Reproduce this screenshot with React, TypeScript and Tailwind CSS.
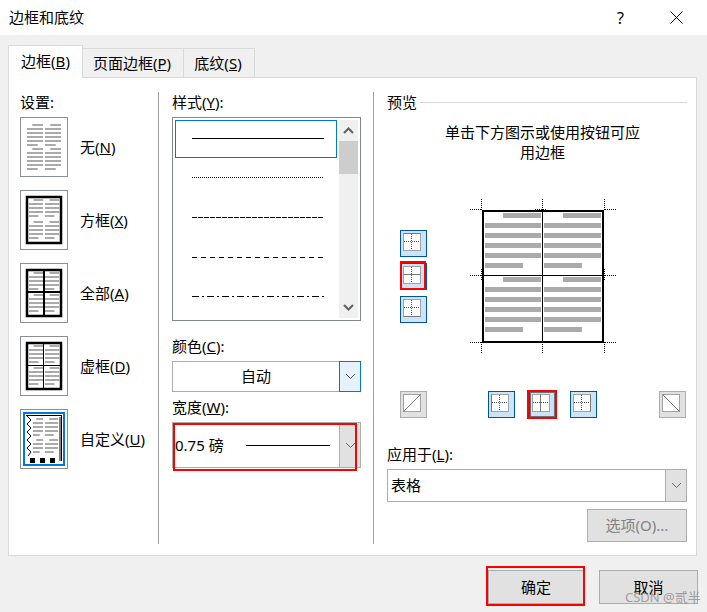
import type { ReactNode } from "react"

const rows = [0, 1, 2, 3, 4, 5]

// small page picture used by the setting thumbnails
function TextColumn({ x1, x2, starts, counts }: { x1: number; x2: number; starts: number[]; counts: number[] }) {
  const w = x2 - x1
  return (
    <>
      {starts.map((start, half) =>
        Array.from({ length: counts[half] }, (_, r) => {
          const rx = r === 0 ? x1 + w * 0.33 : x1
          const rw = r === 0 || r === counts[half] - 1 ? w * 0.67 : w
          return <rect key={`${half}-${r}`} x={rx} y={start + r * 4} width={rw} height={2} fill="#aaa" />
        })
      )}
    </>
  )
}

function PageText({ left, right, starts, counts }: { left: number; right: number; starts: number[]; counts: number[] }) {
  return (
    <>
      <TextColumn x1={left} x2={23} starts={starts} counts={counts} />
      <TextColumn x1={25} x2={right} starts={starts} counts={counts} />
    </>
  )
}

function Thumb({ kind }: { kind: "none" | "box" | "all" | "grid" | "custom" }) {
  return (
    <svg width="48" height="60" viewBox="0 0 48 60" className="block shrink-0">
      <rect x="0.5" y="0.5" width="47" height="59" fill="#fff" stroke="#8b8f93" />
      {kind === "none" && <PageText left={7} right={41} starts={[7, 31]} counts={[6, 6]} />}
      {kind === "box" && (
        <>
          <PageText left={9} right={39} starts={[9, 31]} counts={[5, 5]} />
          <rect x="7" y="7" width="34" height="46" fill="none" stroke="#000" strokeWidth="2.5" />
        </>
      )}
      {kind === "all" && (
        <>
          <PageText left={9} right={39} starts={[9, 31]} counts={[5, 5]} />
          <rect x="7" y="7" width="34" height="46" fill="none" stroke="#000" strokeWidth="2.5" />
          <path d="M24 7V53M7 29H41" stroke="#000" strokeWidth="2" />
        </>
      )}
      {kind === "grid" && (
        <>
          <PageText left={9} right={39} starts={[9, 31]} counts={[5, 5]} />
          <rect x="7" y="7" width="34" height="46" fill="none" stroke="#000" strokeWidth="2.5" />
          <path d="M23.5 7V53M7 29.5H41" stroke="#000" strokeWidth="1" />
        </>
      )}
      {kind === "custom" && (
        <>
          <rect x="4" y="4" width="40" height="52" fill="#fff" stroke="#0078d7" strokeWidth="2" />
          <TextColumn x1={13} x2={23} starts={[9, 30]} counts={[5, 4]} />
          <TextColumn x1={25} x2={38} starts={[9, 30]} counts={[5, 4]} />
          <path d="M6 6.5H42M41.5 6.5V52" fill="none" stroke="#000" strokeWidth="1" />
          <path d="M40 8V52" fill="none" stroke="#000" strokeWidth="1" />
          <path d="M7 7L11 11L7 15L11 19L7 23L11 27L7 31L11 35L7 39L11 43L8 47" fill="none" stroke="#000" strokeWidth="1" />
          <rect x="10" y="49" width="5" height="5" fill="#000" />
          <rect x="20" y="49" width="5" height="5" fill="#000" />
          <rect x="30" y="49" width="5" height="5" fill="#000" />
        </>
      )}
    </svg>
  )
}

const settings = [
  { kind: "none", text: "无", key: "N" },
  { kind: "box", text: "方框", key: "X" },
  { kind: "all", text: "全部", key: "A" },
  { kind: "grid", text: "虚框", key: "D" },
  { kind: "custom", text: "自定义", key: "U" },
] as const

const lineStyles = ["", "1 1", "5 1", "5 4", "7 3 2 3"]

function Chevron({ up, color = "#555", w = 1 }: { up?: boolean; color?: string; w?: number }) {
  return (
    <svg width="11" height="7" viewBox="0 0 11 7">
      <path d={up ? "M1 6L5.5 1.5L10 6" : "M1 1L5.5 5.5L10 1"} fill="none" stroke={color} strokeWidth={w} />
    </svg>
  )
}

// the little border buttons around the preview
function BorderButton({ line, active = true, focus }: { line?: string; active?: boolean; focus?: boolean }) {
  const fill = active ? "#cce4f7" : "#e1e1e1"
  const stroke = active ? "#005499" : "#adadad"
  return (
    <svg width="27" height="27" viewBox="0 0 27 27" className="block">
      <rect x="0.5" y="0.5" width="26" height="26" fill={fill} stroke={stroke} />
      <rect x="3.5" y="3.5" width="17" height="17" fill="#fff" stroke="#555" strokeDasharray="1 1" />
      {active && <path d="M11.5 4V20M4 11.5H20" stroke="#555" strokeDasharray="1 1" fill="none" />}
      {line && <path d={line} stroke="#777" strokeWidth="1" fill="none" />}
      {focus && <rect x="1.5" y="1.5" width="24" height="24" fill="none" stroke="#000" strokeDasharray="1 1" />}
    </svg>
  )
}

function PreviewPage() {
  const cols = [
    { x: 20, w: 56, first: 38, last: 38 },
    { x: 79, w: 57, first: 38, last: 38 },
  ]
  const ys = [18, 82]
  return (
    <svg width="155" height="163" viewBox="0 0 155 163" className="block shrink-0">
      {ys.map((y) =>
        cols.map((c) =>
          rows.map((r) => {
            const isFirst = r === 0
            const isLast = r === 5
            const rw = isFirst ? c.first : isLast ? c.last : c.w
            const rx = isFirst ? c.x + c.w - c.first : c.x
            return <rect key={`${y}-${c.x}-${r}`} x={rx} y={y + r * 10} width={rw} height={5} fill="#aaa" />
          })
        )
      )}
      <rect x="18" y="16" width="120" height="131" fill="none" stroke="#000" strokeWidth="2" />
      <path d="M77.5 16V147M18 80.5H138" stroke="#000" strokeWidth="1" />
      <path
        d="M5 14.5H17M16.5 4V15M70 14.5H82M77.5 4V15M140 14.5H152M139.5 4V15M5 80.5H17M16.5 74V86M140 80.5H152M139.5 74V86M5 147.5H17M16.5 147V159M70 147.5H82M77.5 147V159M140 147.5H152M139.5 147V159"
        stroke="#000"
        strokeDasharray="1 1"
        fill="none"
      />
    </svg>
  )
}

function Label({ text, hot }: { text: string; hot: string }) {
  return (
    <div className="h-5 leading-5 whitespace-nowrap">
      {text}(<u>{hot}</u>):
    </div>
  )
}

function DialogButton({ children, extra }: { children: ReactNode; extra?: string }) {
  return (
    <div className={`flex items-center justify-center border border-[#adadad] bg-[#e1e1e1] ${extra ?? ""}`}>
      {children}
    </div>
  )
}

export default function App() {
  return (
    <div
      className="relative flex h-[612px] w-[707px] flex-col overflow-hidden bg-[#f0f0f0] text-[15px] text-black"
      style={{ fontFamily: '"Noto Sans", "Noto Sans CJK SC", sans-serif' }}
    >
      {/* Title bar */}
      <div className="flex h-[35px] shrink-0 items-center bg-white pl-[9px]">
        <span className="flex-1">边框和底纹</span>
        <span className="mr-[46px] text-[16px]">?</span>
        <svg width="13" height="13" viewBox="0 0 13 13" className="mr-[24px]">
          <path d="M0.5 0.5L12.5 12.5M12.5 0.5L0.5 12.5" stroke="#000" strokeWidth="1" />
        </svg>
      </div>

      {/* Tabs */}
      <div className="relative z-10 mt-[10px] -mb-px flex h-[33px] items-end pl-2">
        <div className="flex h-[33px] w-[75px] items-center justify-center border border-b-0 border-[#d9d9d9] bg-white pb-[1px]">
          边框(<u>B</u>)
        </div>
        <div className="flex h-[30px] w-[101px] items-center justify-center border-t border-r border-b border-[#d9d9d9] pr-[2px]">
          页面边框(<u>P</u>)
        </div>
        <div className="flex h-[30px] w-[71px] items-center justify-center border-t border-r border-b border-[#d9d9d9] pr-[2px]">
          底纹(<u>S</u>)
        </div>
      </div>

      {/* Panel */}
      <div className="mx-2 flex h-[479px] w-[689px] border border-[#d9d9d9] bg-white pt-[14px] pb-[11px]">
        {/* Settings */}
        <div className="w-[150px] border-r border-[#a0a0a0] pl-[11px]">
          <div className="h-5 leading-5 whitespace-nowrap">设置:</div>
          <div className="mt-[5px] flex flex-col gap-[13px]">
            {settings.map((s) => (
              <div key={s.kind} className="flex items-center gap-3 whitespace-nowrap">
                <Thumb kind={s.kind} />
                <span>
                  {s.text}(<u>{s.key}</u>)
                </span>
              </div>
            ))}
          </div>
        </div>

        {/* Style */}
        <div className="w-[215px] border-r border-[#a0a0a0] pl-[13px]">
          <Label text="样式" hot="Y" />
          <div className="mt-[5px] flex h-[204px] w-[189px] border border-[#82878a] p-[2px]">
            <div className="flex w-[163px] flex-col">
              {lineStyles.map((dash, i) => (
                <div
                  key={i}
                  className={
                    i === 0
                      ? "mb-[2px] flex h-[38px] items-center justify-center border border-[#0078d7] pb-[1px] pl-[3px]"
                      : "flex h-[40px] items-center justify-center pb-[3px] pl-[3px]"
                  }
                >
                  <svg width="132" height="1" viewBox="0 0 132 1" className="block">
                    <line x1="0" y1="0.5" x2="132" y2="0.5" stroke="#000" strokeWidth="1" strokeDasharray={dash} />
                  </svg>
                </div>
              ))}
            </div>
            <div className="ml-[2px] flex w-[19px] flex-col items-center justify-between bg-[#f0f0f0]">
              <div className="flex h-[21px] items-center">
                <Chevron up color="#606060" w={2} />
              </div>
              <div className="mb-auto h-[33px] w-full bg-[#cdcdcd]" />
              <div className="flex h-[21px] items-center">
                <Chevron color="#606060" w={2} />
              </div>
            </div>
          </div>

          <div className="mt-[15px]">
            <Label text="颜色" hot="C" />
          </div>
          <div className="mt-[5px] flex h-[31px] w-[189px] border border-[#adadad]">
            <div className="flex flex-1 items-center justify-center">自动</div>
            <div className="-my-px -mr-px flex w-[22px] items-center justify-center border border-[#0078d7] bg-[#e5f1fb]">
              <Chevron />
            </div>
          </div>

          <div className="mt-[5px]">
            <Label text="宽度" hot="W" />
          </div>
          <div className="relative mt-[5px] flex h-[46px] w-[189px] border border-[#adadad]">
            <div className="flex flex-1 items-center pl-[2px]">
              <span className="w-[71px] whitespace-nowrap">0.75 磅</span>
              <div className="h-px w-[84px] bg-black" />
            </div>
            <div className="flex w-[21px] items-center justify-center border-l border-[#adadad] bg-[#e1e1e1]">
              <Chevron color="#666" />
            </div>
            <div className="absolute top-0 left-0 h-[48px] w-[184px] border-2 border-[#ff0000]" />
          </div>
        </div>

        {/* Preview */}
        <div className="w-[313px] pl-[13px]">
          <div className="flex h-5 items-center">
            <span className="leading-5">预览</span>
            <div className="ml-[3px] h-px flex-1 bg-[#d9d9d9]" />
          </div>
          <div className="mt-[10px] pl-[11px] text-center leading-5">
            <div>单击下方图示或使用按钮可应</div>
            <div>用边框</div>
          </div>

          <div className="mt-[33px] flex pl-[13px]">
            <div className="mt-[35px] flex flex-col gap-[6px]">
              <BorderButton line="M3.5 3.5H20.5" />
              <div className="relative">
                <BorderButton line="M3.5 11.5H20.5" />
                <div className="absolute -top-[2px] left-0 h-[29px] w-[26px] border-2 border-[#ff0000]" />
              </div>
              <BorderButton line="M3.5 20.5H20.5" />
            </div>
            <div className="ml-[38px]">
              <PreviewPage />
            </div>
          </div>

          <div className="mt-[33px] ml-[13px] flex w-[286px] items-start">
            <BorderButton active={false} line="M3.5 20.5L20.5 3.5" />
            <div className="ml-[61px] flex gap-[14px]">
              <BorderButton line="M3.5 3.5V20.5" />
              <div className="relative">
                <BorderButton line="M11.5 3.5V20.5" focus />
                <div className="absolute -top-[1px] -left-[2px] h-[29px] w-[30px] border-2 border-[#ff0000]" />
              </div>
              <BorderButton line="M20.5 3.5V20.5" />
            </div>
            <div className="ml-auto">
              <BorderButton active={false} line="M3.5 3.5L20.5 20.5" />
            </div>
          </div>

          <div className="mt-[26px]">
            <Label text="应用于" hot="L" />
          </div>
          <div className="mt-[5px] flex h-[33px] w-[300px] border border-[#adadad]">
            <div className="flex flex-1 items-center pl-[3px]">表格</div>
            <div className="flex w-[21px] items-center justify-center border-l border-[#adadad] bg-[#e1e1e1]">
              <Chevron color="#666" />
            </div>
          </div>
          <div className="mt-[7px] flex w-[300px] justify-end">
            <DialogButton extra="h-[33px] w-[100px] text-[#838383]">选项(O)...</DialogButton>
          </div>
        </div>
      </div>

      {/* Footer buttons */}
      <div className="mt-[14px] flex justify-end gap-[15px] pr-[9px]">
        <div className="relative">
          <DialogButton extra="h-[34px] w-[96px]">确定</DialogButton>
          <div className="absolute -top-[4px] -left-[2px] h-[40px] w-[99px] border-2 border-[#ff0000]" />
        </div>
        <DialogButton extra="h-[34px] w-[99px]">取消</DialogButton>
      </div>

      {/* Watermark */}
      <div className="absolute top-[587px] left-[625px] text-[13px] leading-5 whitespace-nowrap text-[#8c8c8c]/80">
        CSDN @贰半
      </div>
    </div>
  )
}
